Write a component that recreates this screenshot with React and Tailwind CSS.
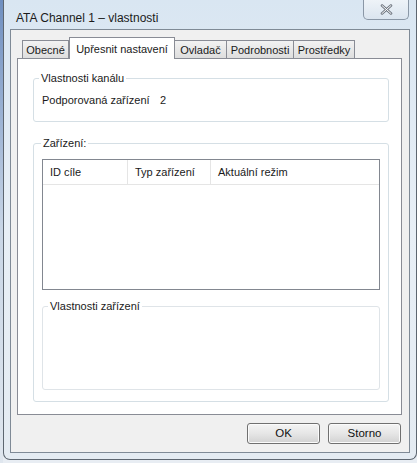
import React from 'react';

const tabs = [
  { label: 'Obecné', w: 'w-[47px]' },
  { label: 'Upřesnit nastavení', w: 'w-[106px]', active: true },
  { label: 'Ovladač', w: 'w-[52px]' },
  { label: 'Podrobnosti', w: 'w-[67px]' },
  { label: 'Prostředky', w: 'w-[61px]' },
];

const columns = [
  { label: 'ID cíle', w: 'w-[85px]' },
  { label: 'Typ zařízení', w: 'w-[83px]' },
  { label: 'Aktuální režim', w: 'flex-1' },
];

function Button({ children }) {
  return (
    <button className="w-[73px] h-[21px] rounded-[3px] border border-[#707070] bg-gradient-to-b from-[#f4f4f4] via-[#e6e6e6] to-[#d2d2d2] text-[11.5px] text-[#111] shadow-[inset_0_0_0_1px_#fbfbfb]">
      {children}
    </button>
  );
}

export default function App() {
  return (
    <div className="w-[417px] h-[463px] flex bg-[#e8edf3] overflow-hidden font-['Liberation_Sans',Arial,sans-serif] text-[11px] text-[#1a1a1a]">
      {/* sliver of the window behind */}
      <div className="w-[3px] bg-gradient-to-b from-[#6f8fc0] via-[#c9d6e6] to-[#dfe6ee]" />

      <div className="flex-1 h-[460px] flex flex-col border border-[#5d6670] border-t-0 rounded-b-[7px] bg-gradient-to-b from-[#d9e6f2] via-[#e8eff6] to-[#e4ebf2] px-[6px] pb-[6px]">
        {/* title bar */}
        <div className="h-[29px] flex items-start justify-between">
          <div className="pt-[9px] pl-[6px] text-[12px] text-[#1b1b1b]">ATA Channel 1 – vlastnosti</div>
          <div className="mr-[1px] w-[46px] h-[20px] rounded-b-[5px] border border-t-0 border-[#8a97a6] bg-gradient-to-b from-[#eef3f8] to-[#dbe5ef] flex items-center justify-center">
            <svg width="13" height="11" viewBox="0 0 13 11">
              <path d="M2 1.5 L11 9.5 M11 1.5 L2 9.5" stroke="#6f7680" strokeWidth="2.6" strokeLinecap="round" />
              <path d="M2 1.5 L11 9.5 M11 1.5 L2 9.5" stroke="#ffffff" strokeWidth="1" strokeLinecap="round" />
            </svg>
          </div>
        </div>

        {/* client area */}
        <div className="flex-1 flex flex-col border border-[#7f8a96] bg-[#f0f0f0] pl-[6px] pr-[7px] pt-[7px] pb-[8px]">
          <div className="flex items-end pl-[5px] h-[21px]">
            {tabs.map((t) =>
              t.active ? (
                <div
                  key={t.label}
                  className={`${t.w} h-[22px] -mb-px relative z-10 bg-white border border-b-0 border-[#898c95] flex items-start justify-center pt-[3px]`}
                >
                  {t.label}
                </div>
              ) : (
                <div
                  key={t.label}
                  className={`${t.w} h-[18px] border border-b-0 border-l-0 first:border-l border-[#898c95] bg-gradient-to-b from-[#f2f2f2] to-[#dedede] flex items-center justify-center pt-[1px]`}
                >
                  {t.label}
                </div>
              )
            )}
          </div>

          {/* tab page */}
          <div className="h-[357px] border border-[#898c95] bg-white pl-[15px] pr-[12px] pt-[11px]">
            <fieldset className="h-[52px] border border-[#d5dfe5] rounded-[3px] pl-[6px] pr-[6px]">
              <legend className="px-[2px] ml-[-1px] leading-[16px]">Vlastnosti kanálu</legend>
              <div className="flex pt-[6px] pl-[2px]">
                <span className="w-[118px]">Podporovaná zařízení</span>
                <span>2</span>
              </div>
            </fieldset>

            <fieldset className="mt-[13px] h-[267px] border border-[#d5dfe5] rounded-[3px] px-[8px]">
              <legend className="px-[2px] ml-[-1px] leading-[16px]">Zařízení:</legend>

              <div className="mt-[8px] h-[131px] border border-[#828790] bg-white flex flex-col">
                <div className="h-[25px] flex border-b border-[#e5e5e5]">
                  {columns.map((c) => (
                    <div key={c.label} className={`${c.w} flex items-center pl-[7px] border-r border-[#e5e5e5] last:border-r-0`}>
                      {c.label}
                    </div>
                  ))}
                </div>
              </div>

              <fieldset className="mt-[8px] h-[92px] border border-[#dfe4e8] rounded-[3px] px-[6px]">
                <legend className="px-[2px] ml-[-1px] leading-[16px]">Vlastnosti zařízení</legend>
              </fieldset>
            </fieldset>
          </div>

          <div className="flex-1 flex items-end justify-end gap-[8px] pr-[1px]">
            <Button>OK</Button>
            <Button>Storno</Button>
          </div>
        </div>
      </div>
    </div>
  );
}
